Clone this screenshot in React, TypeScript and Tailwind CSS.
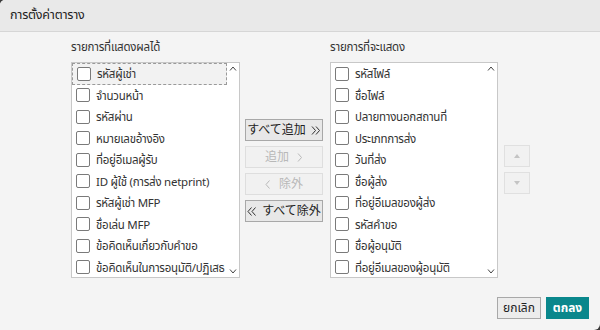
import React from "react";

const leftItems = [
  "รหัสผู้เช่า",
  "จำนวนหน้า",
  "รหัสผ่าน",
  "หมายเลขอ้างอิง",
  "ที่อยู่อีเมลผู้รับ",
  "ID ผู้ใช้ (การส่ง netprint)",
  "รหัสผู้เช่า MFP",
  "ชื่อเล่น MFP",
  "ข้อคิดเห็นเกี่ยวกับคำขอ",
  "ข้อคิดเห็นในการอนุมัติ/ปฏิเสธ",
];

const rightItems = [
  "รหัสไฟล์",
  "ชื่อไฟล์",
  "ปลายทางนอกสถานที่",
  "ประเภทการส่ง",
  "วันที่ส่ง",
  "ชื่อผู้ส่ง",
  "ที่อยู่อีเมลของผู้ส่ง",
  "รหัสคำขอ",
  "ชื่อผู้อนุมัติ",
  "ที่อยู่อีเมลของผู้อนุมัติ",
];

const font = { fontFamily: '"Noto Sans", "Noto Sans Thai", "Noto Sans CJK JP", sans-serif' };

function Chevron({ dir }: { dir: "up" | "down" }) {
  return (
    <svg width="8" height="5" viewBox="0 0 8 5" className="text-[#444]">
      {dir === "up" ? (
        <path d="M1 4.5 L4 1 L7 4.5" fill="none" stroke="currentColor" strokeWidth="1" />
      ) : (
        <path d="M1 0.5 L4 4 L7 0.5" fill="none" stroke="currentColor" strokeWidth="1" />
      )}
    </svg>
  );
}

function DoubleChevron({ dir, color }: { dir: "left" | "right"; color: string }) {
  return (
    <svg width="10" height="9" viewBox="0 0 10 9" style={{ color }}>
      {dir === "right" ? (
        <>
          <path d="M1 0.5 L4.5 4.5 L1 8.5" fill="none" stroke="currentColor" strokeWidth="1" />
          <path d="M5 0.5 L8.5 4.5 L5 8.5" fill="none" stroke="currentColor" strokeWidth="1" />
        </>
      ) : (
        <>
          <path d="M4.5 0.5 L1 4.5 L4.5 8.5" fill="none" stroke="currentColor" strokeWidth="1" />
          <path d="M8.5 0.5 L5 4.5 L8.5 8.5" fill="none" stroke="currentColor" strokeWidth="1" />
        </>
      )}
    </svg>
  );
}

function SingleChevron({ dir, color }: { dir: "left" | "right"; color: string }) {
  return (
    <svg width="6" height="9" viewBox="0 0 6 9" style={{ color }}>
      {dir === "right" ? (
        <path d="M1 0.5 L4.5 4.5 L1 8.5" fill="none" stroke="currentColor" strokeWidth="1" />
      ) : (
        <path d="M4.5 0.5 L1 4.5 L4.5 8.5" fill="none" stroke="currentColor" strokeWidth="1" />
      )}
    </svg>
  );
}

function ListBox({ items, selectFirst, width }: { items: string[]; selectFirst?: boolean; width: string }) {
  return (
    <div className={`${width} h-[216px] border border-[#c8c8c8] bg-white flex`}>
      <div className="flex-1 flex flex-col overflow-hidden">
        {items.map((t, i) => (
          <div
            key={t}
            className={`h-[21.5px] shrink-0 flex items-center pl-[4px] gap-[6px] ${
              selectFirst && i === 0 ? "border border-dashed border-[#9a9a9a] bg-[#f2f2f2] pl-[3px]" : ""
            }`}
          >
            <div className="w-[14px] h-[14px] border border-[#7a7a7a] rounded-[2px] bg-white shrink-0" />
            <span className="text-[11.5px] tracking-[-0.25px] text-[#333] whitespace-nowrap leading-none">{t}</span>
          </div>
        ))}
      </div>
      <div className="w-[12px] flex flex-col items-center justify-between pt-[3px] pb-[3px]">
        <Chevron dir="up" />
        <Chevron dir="down" />
      </div>
    </div>
  );
}

export default function App() {
  return (
    <div className="w-[600px] h-[330px] bg-[#3a3a3a]" style={font}>
      <div className="w-full h-full bg-[#f4f4f4] rounded-tl-[5px] rounded-br-[6px] flex flex-col overflow-hidden">
        <div className="h-[32px] shrink-0 bg-[#e9e9e9] border-b border-[#d6d6d6] flex items-center pl-[10px]">
          <span className="text-[12.5px] tracking-[-0.2px] text-[#222]">การตั้งค่าตาราง</span>
        </div>
        <div className="flex pl-[71px] pt-[7px]">
          <div className="flex flex-col">
            <div className="h-[16px] text-[11.5px] tracking-[-0.2px] leading-[16px] text-[#333] mb-[7px]">รายการที่แสดงผลได้</div>
            <ListBox items={leftItems} selectFirst width="w-[169px]" />
          </div>
          <div className="flex flex-col gap-[5px] pt-[80px] ml-[5px]">
            <button className="w-[78px] h-[22px] border border-[#a8a8a8] bg-[#e8e8e8] flex items-center justify-center gap-[5px] text-[12px] text-[#222]">
              <span>すべて追加</span>
              <DoubleChevron dir="right" color="#333" />
            </button>
            <button className="w-[78px] h-[22px] border border-[#dedede] bg-[#f1f1f1] flex items-center justify-center gap-[8px] text-[12px] text-[#b8b8b8]">
              <span>追加</span>
              <SingleChevron dir="right" color="#b8b8b8" />
            </button>
            <button className="w-[78px] h-[22px] border border-[#dedede] bg-[#f1f1f1] flex items-center justify-center gap-[8px] text-[12px] text-[#b8b8b8]">
              <SingleChevron dir="left" color="#b8b8b8" />
              <span>除外</span>
            </button>
            <button className="w-[78px] h-[22px] border border-[#a8a8a8] bg-[#e8e8e8] flex items-center justify-center gap-[5px] text-[12px] text-[#222]">
              <DoubleChevron dir="left" color="#333" />
              <span>すべて除外</span>
            </button>
          </div>
          <div className="flex flex-col ml-[7px]">
            <div className="h-[16px] text-[11.5px] tracking-[-0.2px] leading-[16px] text-[#333] mb-[7px]">รายการที่จะแสดง</div>
            <ListBox items={rightItems} width="w-[168px]" />
          </div>
          <div className="flex flex-col gap-[5px] pt-[106px] ml-[6px]">
            <button className="w-[26px] h-[22px] border border-[#e0e0e0] bg-[#f1f1f1] flex items-center justify-center">
              <svg width="6" height="4" viewBox="0 0 6 4"><path d="M0 4 L3 0 L6 4 Z" fill="#c4c4c4" /></svg>
            </button>
            <button className="w-[26px] h-[22px] border border-[#e0e0e0] bg-[#f1f1f1] flex items-center justify-center">
              <svg width="6" height="4" viewBox="0 0 6 4"><path d="M0 0 L3 4 L6 0 Z" fill="#c4c4c4" /></svg>
            </button>
          </div>
        </div>
        <div className="flex-1" />
        <div className="flex justify-end gap-[5px] pr-[11px] pb-[11px]">
          <button className="w-[44px] h-[22px] border border-[#a8a8a8] bg-[#ececec] text-[12px] text-[#222] flex items-center justify-center">
            ยกเลิก
          </button>
          <button className="w-[43px] h-[22px] bg-[#0a878c] text-[12px] text-white font-bold flex items-center justify-center">
            ตกลง
          </button>
        </div>
      </div>
    </div>
  );
}
